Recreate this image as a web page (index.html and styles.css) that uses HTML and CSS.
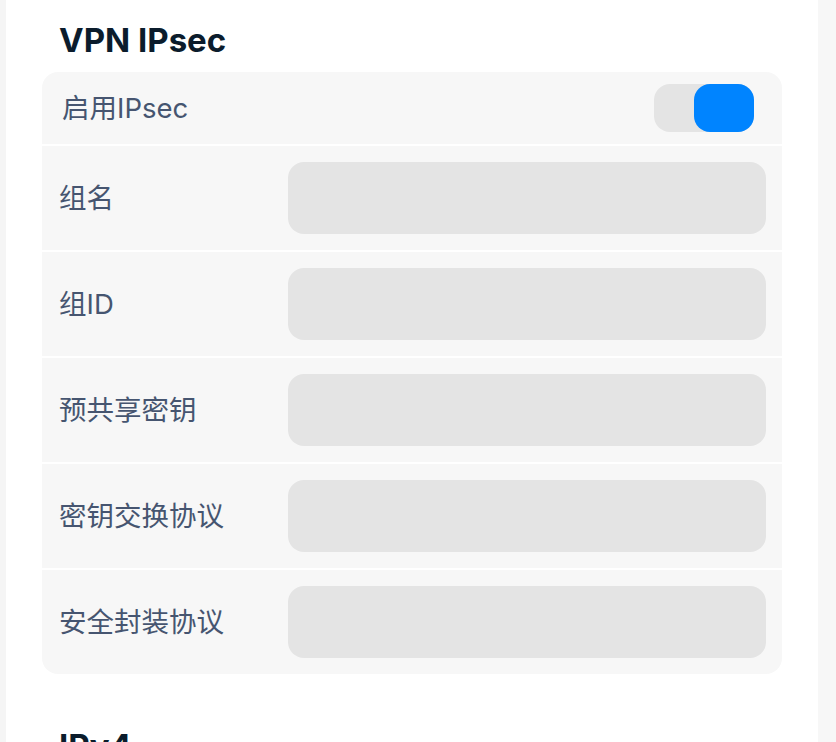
FILE: index.html
```html
<!DOCTYPE html>
<html lang="zh-CN">
<head>
<meta charset="utf-8">
<link rel="stylesheet" href="styles.css">
</head>
<body>
<div class="page">
  <main class="content">
    <h2 class="section-title">VPN IPsec</h2>
    <div class="card">
      <div class="row row-toggle">
        <span class="label label-toggle">启用IPsec</span>
        <div class="switch"><div class="knob"></div></div>
      </div>
      <div class="row">
        <span class="label">组名</span>
        <div class="input"></div>
      </div>
      <div class="row">
        <span class="label">组ID</span>
        <div class="input"></div>
      </div>
      <div class="row">
        <span class="label">预共享密钥</span>
        <div class="input"></div>
      </div>
      <div class="row">
        <span class="label">密钥交换协议</span>
        <div class="input"></div>
      </div>
      <div class="row">
        <span class="label">安全封装协议</span>
        <div class="input"></div>
      </div>
    </div>
    <h2 class="section-title next">IPv4</h2>
  </main>
  <aside class="side"></aside>
</div>
</body>
</html>
```
FILE: styles.css
```css
html, body {
  margin: 0;
  padding: 0;
  background: #ffffff;
  overflow: hidden;
}
.page {
  display: flex;
  height: 742px;
  border-left: 6px solid #f5f5f5;
  font-family: Inter, "Noto Sans CJK SC", sans-serif;
}
.content {
  width: 776px;
  padding: 0 0 0 36px;
  flex: none;
}
.side {
  flex: 1;
  background: #f7f7f7;
}
.section-title {
  margin: 0;
  padding: 18px 0 0 17px;
  height: 72px;
  box-sizing: border-box;
  font-size: 33px;
  line-height: 44px;
  font-weight: 700;
  color: #0b1c2c;
}
.section-title.next {
  padding-top: 50px;
}
.card {
  width: 740px;
  display: flex;
  flex-direction: column;
  gap: 2px;
  border-radius: 16px;
  overflow: hidden;
}
.row {
  background: #f7f7f7;
  height: 104px;
  box-sizing: border-box;
  padding: 16px 16px 16px 17px;
  display: flex;
  align-items: center;
}
.row-toggle {
  height: 72px;
  padding: 12px 28px 12px 20px;
  justify-content: space-between;
}
.label {
  width: 229px;
  flex: none;
  font-size: 27.5px;
  padding-bottom: 4px;
  color: #465570;
}
.label-toggle {
  width: auto;
}
.input {
  flex: 1;
  height: 72px;
  background: #e4e4e4;
  border-radius: 16px;
}
.switch {
  width: 100px;
  height: 48px;
  background: #e4e4e4;
  border-radius: 16px;
  display: flex;
  justify-content: flex-end;
}
.knob {
  width: 60px;
  height: 48px;
  background: #0084ff;
  border-radius: 16px;
}
```
